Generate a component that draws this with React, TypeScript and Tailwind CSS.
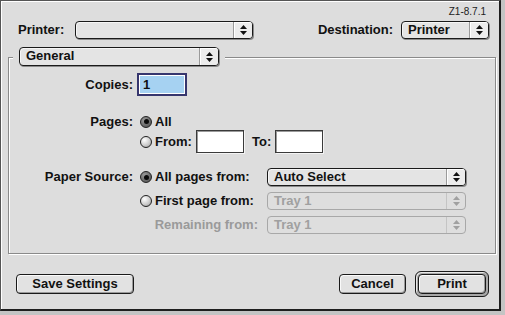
import React from 'react';

const font = { fontFamily: '"Liberation Sans", Arial, sans-serif' };

function Arrows({ disabled }: { disabled?: boolean }) {
  const c = disabled ? '#a0a0a0' : '#111';
  return (
    <svg width="7" height="10" viewBox="0 0 7 10">
      <path d="M3.5 0 L7 4 L0 4 Z" fill={c} />
      <path d="M0 6 L7 6 L3.5 10 Z" fill={c} />
    </svg>
  );
}

function Popup({
  label,
  className,
  disabled,
  tall,
}: {
  label?: string;
  className: string;
  disabled?: boolean;
  tall?: boolean;
}) {
  return (
    <div
      className={`${className} ${tall ? 'h-[19px]' : 'h-[18px]'} flex rounded-[4px] border ${
        disabled
          ? 'border-[#a8a8a8] text-[#a0a0a0] bg-[#dedede]'
          : 'border-[#1a1a1a] text-[#111] bg-[#e4e4e4] shadow-[1px_1px_0_#8a8a8a,inset_1px_1px_0_#f6f6f6]'
      }`}
    >
      <div className="flex-1 pl-[6px] text-[13px] font-bold leading-[16px] whitespace-nowrap overflow-hidden">
        {label}
      </div>
      <div
        className={`w-[19px] flex items-center justify-center border-l ${
          disabled ? 'border-[#c4c4c4]' : 'border-[#9a9a9a] bg-[#ececec] shadow-[inset_1px_1px_0_#fff]'
        } rounded-r-[3px]`}
      >
        <Arrows disabled={disabled} />
      </div>
    </div>
  );
}

function Radio({ checked }: { checked?: boolean }) {
  return (
    <div
      className={`w-[12px] h-[12px] rounded-full border border-[#222] flex items-center justify-center ${
        checked
          ? 'bg-[radial-gradient(circle_at_35%_30%,#9a9a9a,#4a4a4a)]'
          : 'bg-[radial-gradient(circle_at_35%_30%,#ffffff,#c8c8c8_60%,#8c8c8c)]'
      }`}
    >
      {checked && <div className="w-[5px] h-[5px] rounded-full bg-[#0a0a0a]" />}
    </div>
  );
}

function Field({ className }: { className: string }) {
  return (
    <div
      className={`${className} h-[23px] bg-white border border-[#3a3a3a] shadow-[inset_1px_1px_0_#9a9a9a,1px_1px_0_#f4f4f4]`}
    />
  );
}

function Button({ label, className }: { label: string; className: string }) {
  return (
    <div
      className={`${className} h-[20px] rounded-[4px] border border-[#1a1a1a] bg-[#e2e2e2] shadow-[inset_1px_1px_0_#fafafa,inset_-1px_-1px_0_#9a9a9a] flex items-center justify-center text-[13px] font-bold text-[#111]`}
    >
      {label}
    </div>
  );
}

export default function App() {
  return (
    <div className="w-[505px] h-[315px] bg-[#c4c4c4]" style={font}>
      <div className="w-[501px] h-[311px] bg-[#dddddd] border-l border-t border-r-2 border-b-2 border-l-[#555] border-t-[#555] border-r-[#1e1e1e] border-b-[#1e1e1e] shadow-[inset_1px_1px_0_#fff] flex flex-col text-[#111]">
        {/* version tag */}
        <div className="h-[19px] flex justify-end pt-[5px] pr-[13px] text-[10px] leading-[12px] text-[#222]">
          Z1-8.7.1
        </div>

        {/* printer / destination */}
        <div className="mt-[1px] h-[19px] flex items-start pl-[17px] pr-[10px]">
          <div className="w-[57px] text-[13px] font-bold leading-[18px]">Printer:</div>
          <Popup className="w-[178px]" />
          <div className="flex-1" />
          <div className="text-[13px] font-bold leading-[18px]">Destination:</div>
          <Popup label="Printer" className="ml-[8px] w-[88px]" />
        </div>

        {/* panel selector */}
        <div className="mt-[7px] ml-[12px] flex relative z-10">
          <div className="px-[6px] bg-[#dddddd]">
            <Popup label="General" className="w-[200px]" tall />
          </div>
        </div>

        {/* group box */}
        <div className="-mt-[9px] ml-[7px] mr-[3px] h-[197px] border border-[#8a8a8a] shadow-[1px_1px_0_#fff,inset_1px_1px_0_#fff] flex flex-col">
          <div className="mt-[15px] flex items-center h-[23px]">
            <div className="w-[124px] text-right text-[13px] font-bold">Copies:</div>
            <div className="ml-[4px] w-[50px] h-[23px] border-2 border-[#36366e] bg-white p-[1px]">
              <div className="w-full h-full bg-[#a6d2f2] text-[13px] font-bold leading-[17px] pl-[3px]">1</div>
            </div>
          </div>

          <div className="mt-[17px] flex items-center h-[17px]">
            <div className="w-[124px] text-right text-[13px] font-bold">Pages:</div>
            <div className="ml-[7px]">
              <Radio checked />
            </div>
            <div className="ml-[3px] text-[13px] font-bold">All</div>
          </div>
          <div className="flex items-center h-[23px]">
            <div className="w-[124px]" />
            <div className="ml-[7px]">
              <Radio />
            </div>
            <div className="ml-[3px] w-[41px] text-[13px] font-bold">From:</div>
            <Field className="w-[48px]" />
            <div className="ml-[8px] w-[23px] text-[13px] font-bold">To:</div>
            <Field className="w-[48px]" />
          </div>

          <div className="mt-[15px] flex flex-col gap-[6px]">
            <div className="flex items-center h-[18px]">
              <div className="w-[124px] text-right text-[13px] font-bold">Paper Source:</div>
              <div className="ml-[7px] w-[127px] flex items-center">
                <Radio checked />
                <div className="ml-[3px] text-[13px] font-bold">All pages from:</div>
              </div>
              <Popup label="Auto Select" className="w-[199px]" />
            </div>
            <div className="flex items-center h-[18px]">
              <div className="w-[124px]" />
              <div className="ml-[7px] w-[127px] flex items-center">
                <Radio />
                <div className="ml-[3px] text-[13px] font-bold">First page from:</div>
              </div>
              <Popup label="Tray 1" className="w-[199px]" disabled />
            </div>
            <div className="flex items-center h-[18px]">
              <div className="w-[124px]" />
              <div className="ml-[7px] w-[127px] pr-[9px] text-right text-[13px] font-bold text-[#9a9a9a]">
                Remaining from:
              </div>
              <Popup label="Tray 1" className="w-[199px]" disabled />
            </div>
          </div>
        </div>

        {/* buttons */}
        <div className="mt-[17px] h-[26px] flex items-center pl-[15px] pr-[10px]">
          <Button label="Save Settings" className="w-[118px]" />
          <div className="flex-1" />
          <Button label="Cancel" className="w-[67px]" />
          <div className="ml-[9px] w-[74px] h-[26px] rounded-[6px] border border-[#1a1a1a] bg-[#a8a8a8] shadow-[inset_1px_1px_0_#e8e8e8] p-[2px]">
            <Button label="Print" className="w-full" />
          </div>
        </div>
      </div>
    </div>
  );
}
